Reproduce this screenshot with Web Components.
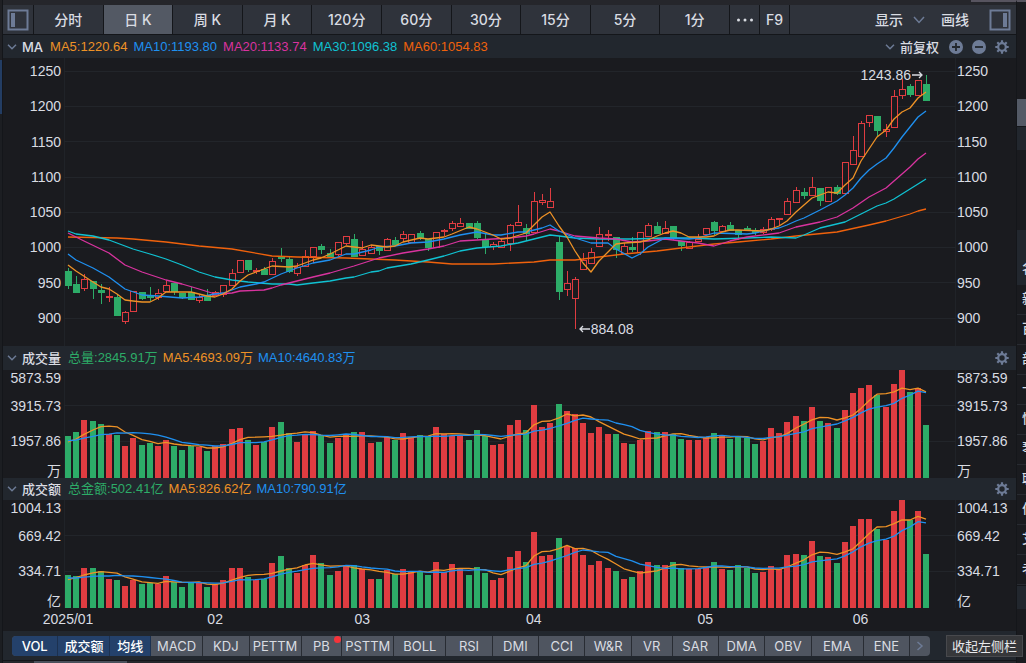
<!DOCTYPE html>
<html lang="zh-CN">
<head>
<meta charset="utf-8">
<title>K线</title>
<style>
  body {
    margin: 0;
    background: #1a1b1f;
    --bg: #1a1b1f;
    --bar: #22272e;
    --line: #14161a;
    --text: #d9dce2;
    --icon: #6d7b96;
    --red: #df3c41;
    --green: #2dac68;
    --orange: #ee9226;
    --blue: #1f90f0;
    --pink: #d9339f;
    --cyan: #10c2d2;
    --deep: #f0620c;
    --ui: Inter, "Noto Sans CJK SC", sans-serif;
    --num: "Liberation Sans", "Noto Sans CJK SC", sans-serif;
    color: var(--text);
    font-family: var(--num);
  }
</style>
</head>
<body>

<kline-app>
  <tool-bar slot="toolbar"></tool-bar>

  <chart-panel slot="main" label="MA" axis="price" ticks="1250 1200 1150 1100 1050 1000 950 900">
    <span slot="legend" style="color: var(--orange)">MA5:1220.64</span>
    <span slot="legend" style="color: var(--blue)">MA10:1193.80</span>
    <span slot="legend" style="color: var(--pink)">MA20:1133.74</span>
    <span slot="legend" style="color: var(--cyan)">MA30:1096.38</span>
    <span slot="legend" style="color: var(--deep)">MA60:1054.83</span>
    <zoom-tools slot="tools"></zoom-tools>
    <price-plot></price-plot>
  </chart-panel>

  <chart-panel slot="volume" label="成交量" axis="bars" ticks="5873.59 3915.73 1957.86 万">
    <span slot="legend" style="color: var(--green)">总量:2845.91万</span>
    <span slot="legend" style="color: var(--orange)">MA5:4693.09万</span>
    <span slot="legend" style="color: var(--blue)">MA10:4640.83万</span>
    <bar-plot series="volume"></bar-plot>
  </chart-panel>

  <chart-panel slot="amount" label="成交额" axis="bars" ticks="1004.13 669.42 334.71 亿">
    <span slot="legend" style="color: var(--green)">总金额:502.41亿</span>
    <span slot="legend" style="color: var(--orange)">MA5:826.62亿</span>
    <span slot="legend" style="color: var(--blue)">MA10:790.91亿</span>
    <bar-plot series="amount"></bar-plot>
  </chart-panel>

  <date-axis slot="dates"></date-axis>
  <indicator-bar slot="indicators"></indicator-bar>
  <side-list slot="side"></side-list>
</kline-app>

<script>
const COUNT = 106;
const WIDTH = 892;
const STEP = 8.176;
const centerOf = (i) => Math.round(4 + STEP * i);

// one candle: colour, high, body top, body bottom, low
const candles = `
G210,213,227,231 G218,226,234,235 R216,221,230,233 G223,223,230,241 G226,232,234,246 R229,238,239,244
G236,239,257,257 R253,254,263,266 R233,233,253,253 G234,234,240,242 G229,238,239,243 R231,235,239,242
R223,227,233,233 G225,225,233,237 G235,235,239,241 G229,234,241,241 R237,239,242,245 G231,237,242,242
R233,234,237,237 R227,227,236,239 R211,215,227,227 R202,202,214,215 G202,202,211,214 R210,212,213,216
G209,211,216,216 R200,203,216,216 G190,198,200,204 G199,201,213,215 R205,209,215,218 R192,198,208,208
R189,189,198,205 G186,188,191,196 G191,195,198,198 R184,184,196,198 R178,178,185,187 G176,181,198,198
R183,191,197,197 R187,189,195,195 G188,188,192,197 R180,181,192,192 G179,182,186,186 R173,176,180,184
R176,176,184,184 G173,175,180,182 G181,181,189,193 R174,174,189,189 R171,172,173,178 R163,165,170,173
R160,165,168,168 G165,165,170,170 G163,165,179,181 G176,181,188,196 R184,186,188,192 R181,183,189,189
R166,167,185,193 R147,164,167,167 G166,170,175,183 R134,143,174,174 R136,142,144,147 R130,143,149,149
G178,184,233,242 R213,225,231,238 R219,221,240,271 R195,202,211,211 R190,194,205,205 R169,176,188,188
R172,176,177,183 G179,179,191,200 R185,188,195,195 G179,189,191,194 R174,174,194,197 R165,167,178,178
G164,168,175,175 R163,170,175,175 G168,168,179,182 G183,183,187,193 R183,184,190,191 R176,181,183,184
R170,170,176,177 G163,164,172,177 R167,168,173,173 G164,167,172,173 G172,172,176,182 G168,170,172,173
G170,173,174,177 R169,171,174,176 R159,161,171,173 R160,160,161,167 R140,143,156,156 R129,132,144,144
G130,134,137,141 R119,129,137,137 G130,130,142,148 R129,129,143,144 G127,129,135,137 R104,104,135,136
R78,92,106,106 R63,65,98,98 R57,57,64,69 G58,58,72,78 R66,71,73,79 R32,38,69,69
R21,31,37,41 G26,28,36,39 R22,22,37,37 G17,26,42,43`
  .trim().split(/\s+/)
  .map((s) => ({ color: s[0] === "R" ? "red" : "green", v: s.slice(1).split(",").map(Number) }));

// index,level pairs of the averages
const averages = {
  deep: "0,179 6,180 8,181 12,184 16,188 20,191 25,198 28,199 34,200 40,202 42,203 44,204 47,206 51,206 52,206 57,204 59,202 62,202 64,200 65,199 68,196 72,193 76,189 79,186 82,184 86,181 89,178 94,174 98,167 100,163 103,156 104,153 105,151",
  cyan: "0,173 1,176 3,178 4,180 5,182 6,185 8,191 10,196 12,201 14,207 16,214 18,219 20,222 22,224 25,226 27,226 28,227 30,225 32,223 34,220 35,219 37,214 38,213 39,210 42,206 44,202 46,198 48,193 50,190 53,188 55,185 57,181 59,177 60,178 62,180 65,181 69,181 73,180 76,180 79,181 83,180 86,179 89,180 90,177 92,170 95,164 97,156 99,148 100,145 101,141 103,131 105,121",
  pink: "0,175 2,183 5,195 7,207 9,214 12,222 14,226 16,231 18,236 20,235 21,233 24,232 25,230 26,227 28,223 30,219 32,215 35,208 38,200 41,195 44,191 46,188 48,183 50,182 52,181 54,180 56,178 57,176 59,171 60,173 62,178 65,180 67,181 69,184 71,183 73,181 75,183 77,185 79,188 81,183 83,179 86,176 87,175 89,169 92,164 94,159 96,150 98,139 100,130 102,116 103,109 104,101 105,95",
  blue: "0,196 1,202 3,210 5,219 7,231 9,237 11,238 14,240 16,239 18,236 19,235 20,232 21,229 23,226 24,224 26,216 28,210 30,205 32,202 34,196 35,196 37,192 38,189 40,188 42,185 44,184 46,181 48,177 50,174 52,177 53,177 55,174 56,174 58,170 59,167 60,173 62,180 64,185 66,185 67,191 69,200 70,196 71,189 73,180 76,181 77,180 79,175 83,176 84,175 86,171 87,170 88,167 89,163 90,160 91,156 92,152 94,143 95,137 96,130 97,120 98,112 99,106 100,100 101,90 102,79 103,69 104,59 105,53",
  orange: "0,207 1,213 3,224 4,229 5,231 6,236 7,242 8,243 9,244 10,244 11,240 12,234 15,234 17,238 18,239 19,236 20,231 21,223 22,217 23,214 25,208 27,209 28,208 30,202 31,200 32,196 33,192 34,188 36,190 37,187 39,189 40,188 41,184 43,180 44,181 45,180 46,179 47,176 49,169 50,171 52,177 53,181 54,180 56,175 57,167 58,159 59,154 60,168 61,179 62,193 63,205 64,214 65,203 66,194 67,186 68,185 70,184 71,182 72,178 73,175 74,173 75,175 76,179 78,179 79,178 80,174 81,172 82,172 85,173 86,171 87,168 88,163 89,154 91,140 92,137 93,134 94,135 95,127 96,120 97,103 98,91 99,79 100,72 101,61 102,54 103,50 104,40 105,34",
};

// the first nine values are older than the visible range and only feed the averages
const bars = {
  volume: [39, 39, 39, 38, 38, 31, 35, 35, 37,
    42, 46, 58, 57, 54, 44, 43, 32, 40, 33, 35, 32, 38, 32, 28, 32, 31, 27, 32, 34, 49, 50, 38, 33, 36, 51, 56, 45, 36, 43, 47,
    43, 35, 40, 44, 46, 46, 35, 36, 41, 38, 45, 41, 43, 42, 51, 44, 42, 42, 38, 48, 42, 33, 34, 53, 58, 48, 73, 51, 55, 74, 67,
    64, 55, 45, 51, 44, 44, 35, 34, 38, 47, 46, 46, 44, 39, 38, 38, 41, 45, 42, 39, 41, 40, 34, 37, 50, 45, 56, 62, 57, 71, 57,
    55, 50, 68, 85, 90, 93, 83, 71, 94, 108, 86, 90, 53],
  amount: [32, 32, 32, 31, 31, 22, 27, 29, 31,
    33, 32, 40, 40, 37, 29, 28, 22, 28, 24, 25, 24, 32, 26, 21, 25, 26, 21, 24, 28, 40, 40, 31, 28, 29, 45, 52, 40, 35, 43, 53,
    45, 33, 37, 43, 43, 39, 29, 29, 38, 34, 39, 36, 37, 33, 46, 36, 44, 39, 33, 41, 35, 28, 30, 51, 57, 46, 76, 52, 53, 70, 62,
    60, 53, 43, 47, 40, 37, 29, 31, 37, 46, 43, 43, 46, 40, 39, 39, 41, 46, 39, 38, 43, 40, 35, 36, 42, 39, 53, 54, 53, 67, 52,
    51, 45, 66, 82, 89, 89, 79, 68, 97, 108, 88, 97, 54],
};

const chevron = `<svg class="chevron" width="10" height="6" viewBox="0 0 10 6" aria-hidden="true"><path d="M1 .8 5 4.8 9 .8" fill="none" stroke="currentColor" stroke-width="1.5"/></svg>`;
const gear = `<svg width="14" height="14" viewBox="0 0 14 14" fill="none" stroke="currentColor" aria-hidden="true">
  <circle cx="7" cy="7" r="3.8" stroke-width="2.2"/>
  <path stroke-width="2.2" d="M7 .3V3M7 11v2.7M.3 7H3M11 7h2.7M2.3 2.3l1.9 1.9M9.8 9.8l1.9 1.9M2.3 11.7l1.9-1.9M9.8 4.2l1.9-1.9"/>
</svg>`;

const buttonReset = `
  button, select {
    margin: 0;
    padding: 0;
    border: 0;
    background: none;
    color: inherit;
    font: inherit;
    appearance: none;
  }
`;

const linePath = (points, color) =>
  `<polyline points="${points.map((p) => p.join(",")).join(" ")}" fill="none" stroke="var(--${color})" stroke-width="1.3" stroke-linejoin="round" vector-effect="non-scaling-stroke"/>`;

function define(name, html) {
  customElements.define(name, class extends HTMLElement {
    constructor() {
      super();
      this.attachShadow({ mode: "open" });
    }

    connectedCallback() {
      this.shadowRoot.innerHTML = html(this);
    }
  });
}

define("kline-app", () => `
  <style>
    :host {
      display: grid;
      grid-template-columns: 3px 1fr 10px;
      min-height: 100vh;
      overflow: hidden;
    }
    .edge {
      background: linear-gradient(#1f2024 60px, #233d63 60px 114px, #1c1e22 114px);
      border-right: 1px solid var(--line);
    }
    main {
      display: flex;
      flex-direction: column;
      min-width: 0;
      padding-top: 5px;
      box-sizing: border-box;
      background:
        linear-gradient(#57545f, #57545f) right top / 45px 2px no-repeat,
        linear-gradient(#25262b 5px, transparent 5px);
    }
    slot[name=main]::slotted(*) { flex: 1; }
    .below {
      height: 3px;
      background: linear-gradient(90deg, #25272c 31px, #4a505b 31px 124px, #25272c 124px);
      border-top: 1px solid var(--line);
      box-sizing: border-box;
    }
  </style>
  <div class="edge"></div>
  <main>
    <slot name="toolbar"></slot>
    <slot name="main"></slot>
    <slot name="volume"></slot>
    <slot name="amount"></slot>
    <slot name="dates"></slot>
    <slot name="indicators"></slot>
    <div class="below"></div>
  </main>
  <slot name="side"></slot>
`);

define("tool-bar", () => `
  <style>
    ${buttonReset}
    :host {
      display: flex;
      height: 30px;
      background: #2f333b;
      border-bottom: 1px solid var(--line);
      box-sizing: border-box;
      font: 500 14px/29px var(--ui);
    }
    button { white-space: nowrap; }
    .cell { border-right: 1px solid var(--line); box-sizing: border-box; }
    .left { width: 31px; }
    .more, .f9 { width: 30px; }
    .tabs { display: flex; flex: 1; }
    .tabs .cell { flex: 1; }
    .active { background: #535964; }
    .pane { display: flex; align-items: center; justify-content: center; color: var(--icon); }
    .right { display: flex; align-items: center; width: 226px; box-sizing: border-box; padding: 0 5px 0 85px; }
    .menu { display: flex; align-items: center; gap: 10px; margin-right: 16px; }
    .menu .chevron { color: var(--icon); }
    .right .pane { margin-left: auto; }
    svg { display: block; }
    .more svg { margin: auto; }
  </style>
  <button class="cell left pane" aria-label="左侧栏">
    <svg width="22" height="22" viewBox="0 0 22 22"><path d="M1.5 1.5h19v19h-19z" fill="none" stroke="currentColor" stroke-width="2"/><path d="M4 4h4v14H4z" fill="currentColor"/></svg>
  </button>
  <div class="tabs">
    ${["分时", "日 K", "周 K", "月 K", "120分", "60分", "30分", "15分", "5分", "1分"]
      .map((t) => `<button class="cell ${t === "日 K" ? "active" : ""}">${t}</button>`).join("")}
  </div>
  <button class="cell more" aria-label="更多"><svg width="18" height="4" viewBox="0 0 18 4" fill="currentColor"><circle cx="2.5" cy="2" r="1.5"/><circle cx="9" cy="2" r="1.5"/><circle cx="15.5" cy="2" r="1.5"/></svg></button>
  <button class="cell f9">F9</button>
  <div class="right">
    <button class="menu">显示 <svg class="chevron" width="12" height="8" viewBox="0 0 12 8"><path d="M1 1 6 6.5 11 1" fill="none" stroke="currentColor" stroke-width="1.5"/></svg></button>
    <button>画线</button>
    <button class="pane" aria-label="右侧栏">
      <svg width="22" height="22" viewBox="0 0 22 22"><path d="M1.5 1.5h19v19h-19z" fill="none" stroke="currentColor" stroke-width="2"/><path d="M14 4h4v14h-4z" fill="currentColor"/></svg>
    </button>
  </div>
`);

define("zoom-tools", () => `
  <style>
    ${buttonReset}
    :host { display: flex; align-items: center; }
    label { display: flex; align-items: center; gap: 5px; margin-right: 9px; color: var(--icon); }
    select { width: 40px; color: var(--text); font: 500 13px/22px var(--ui); }
    button { display: flex; margin-right: 9px; color: var(--icon); }
  </style>
  <label>${chevron}<select aria-label="复权"><option>前复权</option><option>后复权</option><option>不复权</option></select></label>
  <button aria-label="放大"><svg width="14" height="14" viewBox="0 0 14 14"><circle cx="7" cy="7" r="7" fill="currentColor"/><path d="M3 7h8M7 3v8" stroke="#22272e" stroke-width="1.8"/></svg></button>
  <button aria-label="缩小"><svg width="14" height="14" viewBox="0 0 14 14"><circle cx="7" cy="7" r="7" fill="currentColor"/><path d="M3 7h8" stroke="#22272e" stroke-width="1.8"/></svg></button>
`);

define("chart-panel", (el) => {
  const ticks = el.getAttribute("ticks").split(" ").map((t) => `<span>${t}</span>`).join("");
  const axis = el.getAttribute("axis");
  return `
  <style>
    ${buttonReset}
    :host { display: flex; flex-direction: column; }
    header {
      display: flex;
      align-items: center;
      height: ${axis === "price" ? 23 : el.slot === "volume" ? 24 : 22}px;
      padding: 0 7px 0 4px;
      background: var(--bar);
      font-size: 13px;
      line-height: 22px;
      white-space: nowrap;
    }
    .toggle { display: flex; align-items: center; gap: 5px; font: 500 13px/22px var(--ui); }
    .toggle svg, .gear { color: var(--icon); }
    .legend { display: flex; flex: 1; gap: ${axis === "price" ? 6 : 5}px; padding-left: 7px; }
    .gear { display: flex; }
    .body { display: grid; grid-template-columns: 61px 1fr 60px; flex: 1; }
    .axis { font-size: 14px; line-height: 16px; }
    .axis.price { display: flex; flex-direction: column; justify-content: space-between; padding: 5px 0 20px; }
    .axis.bars { display: grid; grid-template-rows: 28px 35px 30px 15px; }
    .axis.l { text-align: right; padding-right: 3px; }
    .axis.r { padding-left: 1px; }
  </style>
  <header>
    <button class="toggle">${chevron}${el.getAttribute("label")}</button>
    <div class="legend"><slot name="legend"></slot></div>
    <slot name="tools"></slot>
    <button class="gear" aria-label="设置">${gear}</button>
  </header>
  <div class="body">
    <div class="axis l ${axis}">${ticks}</div>
    <slot></slot>
    <div class="axis r ${axis}">${ticks}</div>
  </div>
`;
});

const plotStyle = `
  :host { display: block; position: relative; }
  svg { display: block; width: 100%; height: 100%; overflow: visible; }
  .crisp { shape-rendering: crispEdges; }
`;

const frame = (height) =>
  `<path d="M.5 0V${height}M${WIDTH - .5} 0V${height}" stroke="#202328"/>`;

define("price-plot", () => {
  const grid = [13, 48, 83, 119, 154, 189, 224, 260]
    .map((y) => `<path d="M0 ${y}.5H${WIDTH}" stroke="#22252a"/>`).join("");
  const sticks = candles.map(({ color, v: [high, top, bottom, low] }, i) => {
    const x = centerOf(i);
    const h = Math.max(bottom - top, 1);
    const body = color === "red" && h > 1
      ? `<rect x="${x - 2.5}" y="${top + .5}" width="6" height="${h}" fill="var(--bg)" stroke="var(--red)"/>`
      : `<rect x="${x - 3}" y="${top}" width="7" height="${h + 1}" fill="var(--${color})"/>`;
    return `<path d="M${x + .5} ${high}V${low}" stroke="var(--${color})"/>${body}`;
  }).join("");
  const lines = Object.entries(averages).map(([color, s]) =>
    linePath(s.split(" ").map((p) => p.split(",").map(Number)).map(([i, y]) => [centerOf(i), y]), color)).join("");

  return `
  <style>
    ${plotStyle}
    svg.chart { position: absolute; inset: 0; }
    .mark { position: absolute; display: flex; align-items: center; font-size: 14px; line-height: 16px; }
    .mark svg { width: 12px; height: 8px; }
    .high { right: 33px; top: 3%; }
    .low { left: 57.7%; bottom: 3%; }
  </style>
  <svg class="chart" viewBox="0 0 ${WIDTH} 288" preserveAspectRatio="none">
    <g class="crisp">${frame(288)}${grid}${sticks}</g>
    ${lines}
  </svg>
  <div class="mark high">1243.86<svg viewBox="0 0 12 8"><path d="M1 4h10M8 1l3 3-3 3" fill="none" stroke="currentColor" stroke-width="1.3"/></svg></div>
  <div class="mark low"><svg viewBox="0 0 12 8"><path d="M11 4H1M4 1 1 4l3 3" fill="none" stroke="currentColor" stroke-width="1.3"/></svg>884.08</div>
`;
});

define("bar-plot", (el) => {
  const all = bars[el.getAttribute("series")];
  const old = all.length - COUNT;
  const average = (n) => candles.map((_, i) => {
    const part = all.slice(i + old - n + 1, i + old + 1);
    return [centerOf(i), 108 - part.reduce((a, b) => a + b, 0) / n];
  });
  const rects = candles.map(({ color }, i) => {
    const h = all[i + old];
    return `<rect x="${centerOf(i) - 3}" y="${108 - h}" width="6" height="${h}" fill="var(--${color})"/>`;
  }).join("");
  return `
  <style>
    ${plotStyle}
    :host { height: 108px; }
  </style>
  <svg viewBox="0 0 ${WIDTH} 108" preserveAspectRatio="none">
    <g class="crisp">${frame(108)}<path d="M0 35.5H${WIDTH}M0 71.5H${WIDTH}" stroke="#22252a"/>${rects}</g>
    ${linePath(average(5), "orange")}
    ${linePath(average(10), "blue")}
  </svg>
`;
});

define("date-axis", () => `
  <style>
    :host {
      display: grid;
      grid-template-columns: repeat(${COUNT}, minmax(0, 1fr));
      height: 23px;
      padding: 0 86px 0 61px;
      font-size: 14px;
      line-height: 22px;
    }
    span { grid-row: 1; display: flex; justify-content: center; white-space: nowrap; }
  </style>
  ${[["2025/01", 1], ["02", 19], ["03", 37], ["04", 58], ["05", 79], ["06", 98]]
    .map(([t, col]) => `<span style="grid-column: ${col}">${t}</span>`).join("")}
`);

define("indicator-bar", () => {
  const items = [["VOL", 8], ["成交额", 9], ["均线", 7], ["MACD", 9], ["KDJ", 8], ["PETTM", 9], ["PB", 7], ["PSTTM", 9], ["BOLL", 9],
    ["RSI", 8], ["DMI", 8], ["CCI", 8], ["W&amp;R", 8], ["VR", 7], ["SAR", 8], ["DMA", 8], ["OBV", 8], ["EMA", 9], ["ENE", 8]];
  return `
  <style>
    ${buttonReset}
    :host {
      display: block;
      position: relative;
      padding: 5px 86px 4px 9px;
      background: var(--bar);
      font: 400 13px/20px var(--ui);
    }
    nav { display: flex; height: 20px; border-radius: 4px; background: #4f5560; overflow: hidden; }
    button { flex: 1 1 0; min-width: 0; border-right: 1px solid #282c33; white-space: nowrap; overflow: visible; }
    .on { background: #24416b; color: #fff; font-weight: 500; border-color: #1c3150; }
    .next { flex: none; width: 20px; border: 0; color: var(--icon); }
    .next svg { display: block; margin: auto; }
    .new { position: relative; }
    .new::after {
      content: "";
      position: absolute;
      top: 0;
      right: 0;
      width: 7px;
      height: 7px;
      border-radius: 50%;
      background: #f5333a;
    }
    .tip {
      position: absolute;
      z-index: 1;
      right: -7px;
      top: 4px;
      padding: 0 5px;
      border: 1px solid #48494d;
      background: #36373a;
      color: #e8e9ec;
      font-size: 13px;
      line-height: 20px;
    }
  </style>
  <nav>
    ${items.map(([t, w], i) => `<button class="${i < 3 ? "on" : t === "PB" ? "new" : ""}" style="flex-grow: ${w}">${t}</button>`).join("")}
    <button class="next" aria-label="下一页"><svg width="8" height="10" viewBox="0 0 8 10"><path d="M1.5 1 6 5 1.5 9" fill="none" stroke="currentColor" stroke-width="1.5"/></svg></button>
  </nav>
  <div class="tip" role="tooltip">收起左侧栏</div>
`;
});

define("side-list", () => `
  <style>
    :host {
      display: flex;
      flex-direction: column;
      overflow: hidden;
      border-left: 1px solid var(--line);
      border-top: 2px solid #57545f;
      box-sizing: border-box;
      font: 500 13px/30px var(--ui);
      white-space: nowrap;
    }
    .gap { height: 97px; }
    .thumb { height: 27px; background: #545a66; }
    .box { height: 24px; background: var(--bar); border-top: 1px solid var(--line); box-sizing: border-box; }
    .rest { height: 80px; }
    .head { height: 55px; background: var(--bar); line-height: 76px; }
    .row { height: 30px; border-bottom: 1px solid #282b31; box-sizing: border-box; line-height: 26px; }
    .head, .row { padding-left: 5px; }
  </style>
  <div class="gap"></div>
  <div class="thumb"></div>
  <div class="box"></div>
  <div class="rest"></div>
  <div class="head">名</div>
  ${["新", "百", "部", "卡", "快", "琴", "联", "伯", "艾"].map((t) => `<div class="row">${t}</div>`).join("")}
  <div class="row">老</div>
  <div class="box"></div>
`);
</script>
</body>
</html>
